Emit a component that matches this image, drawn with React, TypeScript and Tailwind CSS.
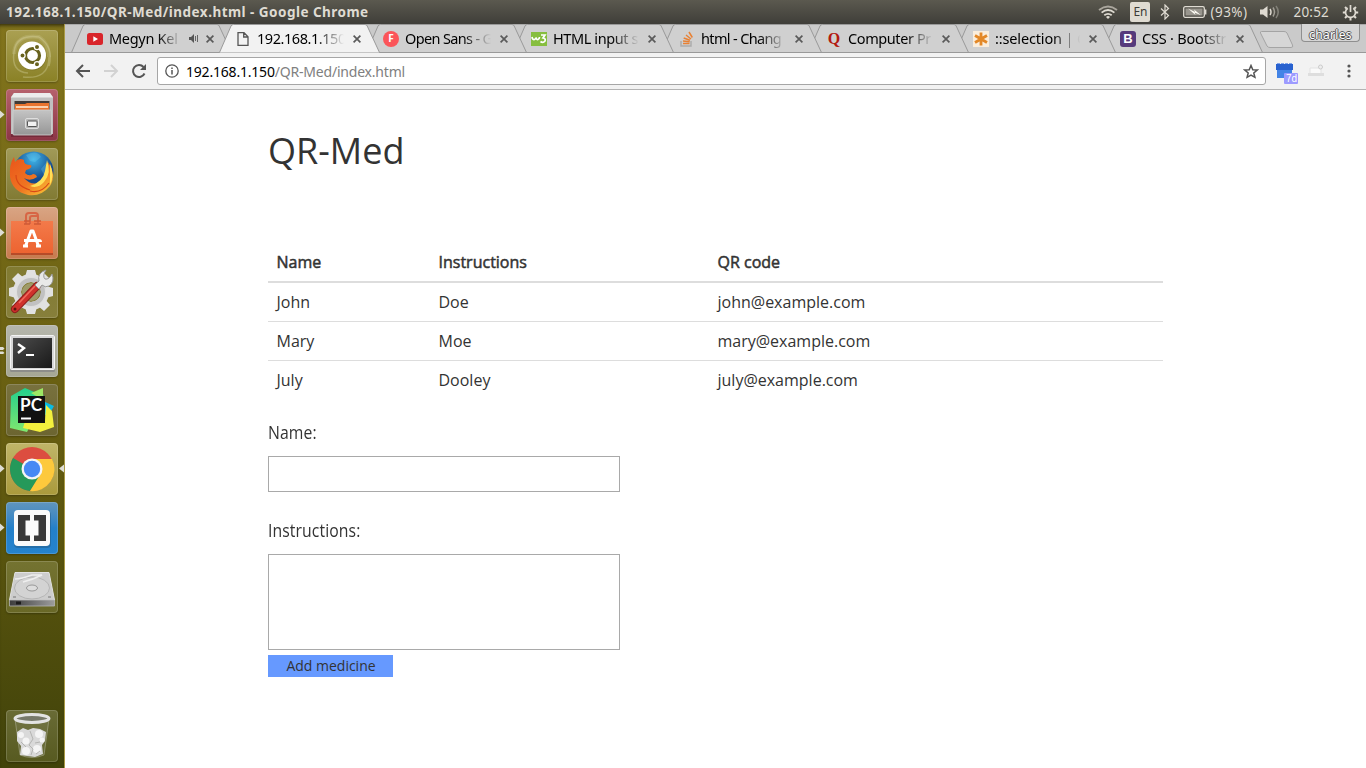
import React from "react";

type Kids = { children: React.ReactNode };

function TopBar() {
  return (
    <header className="flex h-6 shrink-0 items-center justify-between bg-linear-to-b from-[#5b594f] to-[#3f3e39] pl-[6px] pr-[7px] text-[#dfdbd2]">
      <span className="whitespace-nowrap font-[Noto_Sans,sans-serif] text-[13.5px] font-bold leading-6 tracking-[0.47px]">
        192.168.1.150/QR-Med/index.html - Google Chrome
      </span>
      <div className="flex items-center text-[13.5px]">
        <svg width="20" height="16" viewBox="0 0 20 16" fill="none" strokeWidth="1.8" className="mr-[12px]">
          <path d="M1 6Q10-1 19 6" stroke="#aaa69d" />
          <path d="M3.6 8.6Q10 3.5 16.4 8.6" stroke="#dfdbd2" />
          <path d="M6.3 11.2Q10 8.4 13.7 11.2" stroke="#dfdbd2" />
          <path d="M8 13Q10 11.2 12 13L10 15Z" fill="#dfdbd2" stroke="none" />
        </svg>
        <span className="mr-[10px] flex h-5 w-5 items-center justify-center rounded-xs bg-[#dfdbd2] text-[12px] text-[#3c3b37]">En</span>
        <svg width="10" height="16" viewBox="0 0 10 16" fill="none" stroke="#dfdbd2" strokeWidth="1.2" className="mr-[13px]">
          <path d="M1 4.5L8.5 11.5L5 15V1L8.5 4.500L1 11.5" />
        </svg>
        <svg width="24" height="14" viewBox="0 0 24 14" className="mr-[3px]">
          <rect x=".7" y="1.700" width="20.6" height="10.6" rx="1.500" fill="none" stroke="#dfdbd2" strokeWidth="1.300" />
          <rect x="2.500" y="3.500" width="17" height="7" fill="#99968e" />
          <path d="M5 3.600L12 7L11 4.600L18 10.200L11.500 7.600L12.500 10Z" fill="#fffdf5" />
          <path d="M22.600 4.500V9.500" stroke="#dfdbd2" strokeWidth="1.600" />
        </svg>
        <span className="mr-[12px] w-[38px] whitespace-nowrap font-[Noto_Sans,sans-serif] text-[13.5px] tracking-[0.45px]">(93%)</span>
        <svg width="20" height="16" viewBox="0 0 20 16" fill="none" className="mr-[13px]">
          <path d="M0 5.500H3L7.500 2V14L3 10.500H0Z" fill="#dfdbd2" />
          <path d="M10 5Q12 8 10 11" stroke="#dfdbd2" strokeWidth="1.500" />
          <path d="M13 3.500Q16 8 13 12.500" stroke="#a19e95" strokeWidth="1.500" />
          <path d="M16 2Q20.500 8 16 14" stroke="#828078" strokeWidth="1.500" />
        </svg>
        <span className="mr-[13px] font-[Noto_Sans,sans-serif] text-[13.500px] tracking-[0.2px]">20:52</span>
        <svg width="17" height="17" viewBox="0 0 17 17" fill="none" stroke="#dfdbd2">
          <path d="M5.800 4.200A5 5 0 1 0 11.200 4.200M8.500 1V8" strokeWidth="1.700" />
          <path d="M3 3L4.800 4.800M14 3L12.200 4.800M.8 8.500H3.500M13.500 8.500H16.200M3 14L4.800 12.200M14 14L12.200 12.200M8.500 13.500V16.400" strokeWidth="2" />
        </svg>
      </div>
    </header>
  );
}

function Tile({ children, bg, left, right }: { children: React.ReactNode; bg: string; left?: number; right?: boolean }) {
  return (
    <div className="relative h-[52px] w-[65px] shrink-0 pl-[6px]">
      <div className={`h-[52px] w-[52px] overflow-hidden rounded-[4px] shadow-[inset_0_0_0_1px_rgba(255,255,255,.16),0_1px_2px_rgba(0,0,0,.25)] ${bg}`}>
        <svg width="52" height="52" viewBox="0 0 52 52">
          {children}
        </svg>
      </div>
      {left === 1 && (
        <svg className="absolute left-0 top-[21px]" width="5" height="9" viewBox="0 0 5 9"><path d="M0 .5L4.500 4.500L0 8.500Z" fill="#deddd5" /></svg>
      )}
      {left === 2 && (
        <svg className="absolute left-0 top-[21px]" width="5" height="9" viewBox="0 0 5 9"><path d="M0 1H3L4.500 2.500L3 4H0ZM0 5.500H3L4.500 7L3 8H0Z" fill="#deddd5" /></svg>
      )}
      {right && (
        <svg className="absolute right-[1px] top-[21px]" width="6" height="9" viewBox="0 0 6 9"><path d="M6 .5L1 4.500L6 8.500Z" fill="#deddd5" /></svg>
      )}
    </div>
  );
}

function Launcher() {
  return (
    <aside className="flex w-[65px] shrink-0 flex-col gap-[7px] border-r border-[#a99a45] bg-linear-to-b from-[#82741c] via-[#665d10] via-55% to-[#41430a] pt-[6px] shadow-[inset_0_4px_4px_-3px_#221f08]">
      <svg width="0" height="0" className="absolute">
        <defs>
          <linearGradient id="orange" x2="0" y2="1"><stop stopColor="#f37a4a" /><stop offset="1" stopColor="#ed6330" /></linearGradient>
          <linearGradient id="fox" x2="1" y2="1"><stop stopColor="#e9541b" /><stop offset=".55" stopColor="#ef7421" /><stop offset="1" stopColor="#fbd43b" /></linearGradient>
          <radialGradient id="globe" cx=".5" cy=".2"><stop stopColor="#3fb4e8" /><stop offset="1" stopColor="#164a8d" /></radialGradient>
          <linearGradient id="screen" x2="1" y2="1"><stop stopColor="#4c4c4c" /><stop offset="1" stopColor="#191919" /></linearGradient>
          <linearGradient id="pcgreen" x2="0" y2="1"><stop stopColor="#23cf8e" /><stop offset="1" stopColor="#7fe86f" /></linearGradient>
          <linearGradient id="front" x2="0" y2="1"><stop stopColor="#c4c4c4" /><stop offset="1" stopColor="#969696" /></linearGradient>
          <linearGradient id="disk" x2="1" y2="0"><stop stopColor="#3c3c3c" /><stop offset="1" stopColor="#9c9c9c" /></linearGradient>
        </defs>
      </svg>

      <Tile bg="bg-linear-to-b from-[#aaa052] to-[#8a8125]">
        <g fill="none" stroke="#dcd9a8" strokeOpacity=".35" strokeWidth="1.500">
          <path d="M8 24Q9 4 33 7Q43 13 43 27" strokeWidth="4" strokeOpacity=".2" />
          <path d="M8 22Q10 4 33 7M33 7Q48 17 43 36M43 27Q43 50 17 47M22 43Q5 42 8 22" />
        </g>
        <circle cx="26.500" cy="26.500" r="14" fill="#5f5a10" opacity=".3" />
        <circle cx="26" cy="25.500" r="14" fill="#fff" />
        <circle cx="26.500" cy="25.500" r="7" fill="none" stroke="#68621d" strokeWidth="3.200" />
        <g stroke="#fff" strokeWidth="1.200" fill="#68621d">
          <circle cx="16.500" cy="25.500" r="2.600" /><circle cx="31" cy="17" r="2.600" /><circle cx="31" cy="34.200" r="2.600" />
        </g>
      </Tile>

      <Tile bg="bg-linear-to-b from-[#b6616c] to-[#8b3445]" left={1}>
        <path d="M5 45H47V48H5Z" fill="#632230" opacity=".6" />
        <path d="M8 4H44L47 8V45H5V8Z" fill="#c0c0c0" />
        <path d="M8 4H44L47 8.500H5Z" fill="#ececec" />
        <rect x="8.500" y="12" width="35" height="10" fill="#403a37" />
        <path d="M9 15H19L21 14H43V21H9Z" fill="#e9742f" />
        <path d="M10 18H42" stroke="#fff1dc" strokeWidth="1.600" />
        <rect x="7" y="21" width="38.500" height="25" rx="1" fill="url(#front)" stroke="#d0d0d0" strokeWidth=".8" />
        <rect x="19.500" y="29.500" width="13" height="10" rx="1.500" fill="#b5b5b5" stroke="#dedede" strokeWidth="1" />
        <rect x="21.500" y="32" width="9.500" height="5.500" rx=".7" fill="#f2f2f2" stroke="#555" />
      </Tile>

      <Tile bg="bg-linear-to-b from-[#a19a58] to-[#817a33]">
        <circle cx="27.500" cy="23.500" r="20" fill="url(#globe)" />
        <path d="M20 7Q31 1 35 9L29 14L24 13ZM40 15L44 22L39 29L35 21Z" fill="#72cff1" opacity=".3" />
        <path d="M8 9L9 14Q13 9 18 12Q17 17 25 17Q27 20 20 22L19 25Q23 29 27 26Q30 26 31 29Q24 34 18 30Q27 40 37 32Q44 25 42 14Q51 27 44 38Q35 49 22 47Q6 43 4 29Q3 16 8 9Z" fill="url(#fox)" />
        <path d="M41 12Q46 25 38 34Q32 41 24 38Q37 34 39 23ZM44 16Q49 27 44 37" fill="#ffe057" />
        <path d="M10 27Q10 38 24 42M24 43Q35 46 43 35" fill="none" stroke="#d94817" strokeWidth="1.200" />
      </Tile>

      <Tile bg="bg-linear-to-b from-[#d9a584] to-[#c77a4d]" left={1}>
        <path d="M5 14H47V47H5Z" fill="url(#orange)" />
        <path d="M5 46H47V48H5Z" fill="#b74b28" />
        <path d="M20 17V9Q20 6 23 6H29Q32 6 32 9V17M24 17V11Q24 9 26 9H32" fill="none" stroke="#d76545" strokeWidth="2" />
        <path d="M18 14H24M28 14H35M18 17H24M28 17H35" stroke="#cf5a35" strokeWidth="1.500" />
        <path d="M19.500 39L25 24H27L32.500 39M17 39H22M30 39H35M18 33.500H33Q34.500 33.500 34.500 35" fill="none" stroke="#fff" strokeWidth="3" strokeLinejoin="round" />
      </Tile>

      <Tile bg="bg-linear-to-b from-[#817a31] to-[#877f3b]">
        <g transform="translate(25 26)">
          <circle r="14" fill="none" stroke="#dedede" strokeWidth="8" />
          <path d="M-4-22H4L6-15H-6ZM-4 22H4L6 15H-6ZM-22-4V4L-15 6V-6ZM22-4V4L15 6V-6ZM-19-13L-13-19L-7-14L-14-7ZM19-13L13-19L7-14L14-7ZM-19 13L-13 19L-7 14L-14 7ZM19 13L13 19L7 14L14 7Z" fill="#e1e1e1" />
          <circle r="12" fill="none" stroke="#c1c1c1" strokeWidth="4" />
          <circle r="9" fill="#9f9b69" />
        </g>
        <path d="M9 43L31 20" stroke="#8d201c" strokeWidth="8" strokeLinecap="round" />
        <path d="M9 43L31 20" stroke="#cf312c" strokeWidth="6" strokeLinecap="round" />
        <path d="M13 37L29 20" stroke="#f06a5c" strokeWidth="1.600" />
        <path d="M29 19L33 15Q31 7 40 4Q36 10 39 13Q43 14 46 8Q49 16 43 20Q39 22 36 19L33 23Z" fill="#e9e9e9" stroke="#989898" />
        <circle cx="9" cy="43" r="1.500" fill="#5d160f" />
      </Tile>

      <Tile bg="bg-linear-to-b from-[#b5b6ac] to-[#a6a794]" left={2}>
        <rect x="4" y="10" width="45" height="37" rx="1.500" fill="#8d8d89" />
        <rect x="4.500" y="10.500" width="44" height="34" rx="1" fill="#d8d8d8" stroke="#f4f4f4" />
        <rect x="7" y="13" width="39" height="30" fill="url(#screen)" />
        <path d="M12 19L18 23L12 28" fill="none" stroke="#fff" strokeWidth="2.400" />
        <path d="M20 30H28" stroke="#fff" strokeWidth="2" />
      </Tile>

      <Tile bg="bg-linear-to-b from-[#78713e] to-[#6c6530]">
        <path d="M5 12L19 4L33 10L36 5L38 14L21 48L4 44Z" fill="url(#pcgreen)" />
        <path d="M37 17L48 22L43 31H35Z" fill="#0bbbe2" />
        <path d="M40 21L46 27L48 43L34 48L17 44L19 37H39Z" fill="#f3f03d" />
        <path d="M25 9L37 4V16Z" fill="#9de764" />
        <rect x="12" y="12" width="27" height="27" fill="#111" />
        <text x="14" y="27" fill="#fff" fontFamily="Lato, sans-serif" fontWeight="700" fontSize="16.500" textLength="22" lengthAdjust="spacingAndGlyphs">PC</text>
        <path d="M15 34.500H25" stroke="#fff" strokeWidth="2" />
      </Tile>

      <Tile bg="bg-linear-to-b from-[#c0b568] to-[#aa9a3b]" left={1} right>
        <circle cx="26" cy="26" r="22" fill="#dc4d40" />
        <path d="M26 26L7 15A22 22 0 0 0 24 48L35.500 31Z" fill="#25995a" />
        <path d="M26 16H46A22 22 0 0 1 24 48L35 30Z" fill="#fdc93c" />
        <circle cx="26" cy="26" r="10.500" fill="#f5f5f5" />
        <circle cx="26" cy="26" r="8.200" fill="#4789f4" />
      </Tile>

      <Tile bg="bg-linear-to-b from-[#6095bc] via-[#2380c9] to-[#2583ce]" left={1}>
        <rect x="8" y="9" width="37" height="37" rx="4" fill="#24577f" opacity=".45" />
        <rect x="8" y="8" width="36" height="36" rx="4" fill="#fafafa" />
        <path d="M12 13H24V18.500H19.500V33.500H24V39H12ZM28 13H40V39H28V33.500H32.500V18.500H28Z" fill="#393939" />
      </Tile>

      <Tile bg="bg-linear-to-b from-[#747331] to-[#696827]">
        <path d="M9 11.500H43L48.500 39H3.500Z" fill="#cdcdcd" stroke="#e2e2e2" />
        <path d="M3.500 39H48.500V45H3.500Z" fill="url(#disk)" stroke="#b4b4b4" strokeWidth=".8" />
        <path d="M10 40.500H15V43.500H10Z" fill="#1c1c1c" />
        <ellipse cx="26" cy="27" rx="17.500" ry="11" fill="#d3d3d3" stroke="#adadad" strokeWidth=".8" />
        <ellipse cx="26" cy="27" rx="5.500" ry="3" fill="#ddd" stroke="#999" />
        <path d="M9 18Q15 18 26 14H36Q28 18 17 21" fill="none" stroke="#eee" strokeWidth="1.500" />
        <path d="M7 36H10M42 36H45" stroke="#777" />
      </Tile>

      <div className="mb-[6px] mt-auto">
        <Tile bg="bg-linear-to-b from-[#696b35] to-[#575a20]">
          <path d="M9 9H43L38 45Q26 50 14 45Z" fill="#8d916a" fillOpacity=".25" stroke="#cfd0c4" strokeOpacity=".4" />
          <path d="M11 22L17 18L22 20L27 18L34 19L40 22L39 31L36 35L37 44L29 47L21 46L14 45L15 36L11 31Z" fill="#d9d9d9" />
          <g fill="#f4f4f4"><circle cx="15" cy="25" r="3" /><circle cx="20" cy="31" r="3.500" /><circle cx="33" cy="24" r="4" /><circle cx="36" cy="30" r="2.500" /><circle cx="20" cy="41" r="4" /><circle cx="31" cy="39" r="4" /></g>
          <path d="M24 21L27 29L23 35L27 39L25 45M34 32L29 33M15 32L20 37M34 41L30 44" fill="none" stroke="#b4b4b2" strokeWidth="1" />
          <ellipse cx="26" cy="8.500" rx="17" ry="4" fill="#77796a" stroke="#e3e3e3" strokeWidth="3" />
        </Tile>
      </div>
    </aside>
  );
}

function TabItem({ title, icon, active, sound, width, z, spacing, pad }: { title: string; icon: React.ReactNode; active?: boolean; sound?: boolean; width: string; z: string; spacing: string; pad: string }) {
  return (
    <div className={`relative h-[29px] shrink-0 ${width} ${z}`}>
      <svg className="absolute left-0 top-0" width="162" height="29" viewBox="0 0 162 29">
        <path d="M.5 28.500L12 2Q12.800.5 14.500.5H146Q147.500.5 148.200 2L160.500 28.500" fill={active ? "#f2f2f2" : "#d0d0d0"} stroke="#999" />
        {!active && <path d="M0 28.500H162" stroke="#999" />}
      </svg>
      <div className={`relative flex h-[29px] items-center pr-[5px] ${pad}`}>
        <span className="flex h-4 w-4 shrink-0 items-center justify-center">{icon}</span>
        <span className={`ml-[6px] min-w-0 flex-1 whitespace-nowrap bg-linear-to-r from-black from-68% to-transparent bg-clip-text text-[14.500px] text-transparent ${spacing}`}>{title}</span>
        {sound && (
          <svg width="10" height="9" viewBox="0 0 10 9" className="ml-[8px] shrink-0"><path d="M0 3H2L5 0V9L2 6H0Z" fill="#555" /><path d="M6.500 2V7M8.500 1V8" stroke="#666" /></svg>
        )}
        <svg width="8" height="8" viewBox="0 0 8 8" className={sound ? "ml-[7px] shrink-0" : "ml-[9px] shrink-0"}><path d="M.6.6L7.400 7.400M7.400.6L.6 7.400" stroke="#5a5a5a" strokeWidth="1.700" /></svg>
      </div>
    </div>
  );
}

function Tabs() {
  return (
    <div className="flex h-[29px] shrink-0 border-b border-[#999] bg-[#cacaca] pl-[6px] shadow-[inset_0_1px_0_#aaa] font-[Noto_Sans,sans-serif]">
      <TabItem title="Megyn Kel" sound width="w-[148px]" z="z-[8]" spacing="tracking-[-0.3px]" pad="pl-4"
        icon={<svg width="16" height="12" viewBox="0 0 16 12"><rect width="16" height="12" rx="2.500" fill="#d9252a" /><path d="M6.300 3.200L11 6L6.300 8.800Z" fill="#fff" /></svg>} />
      <TabItem title="192.168.1.150" active width="w-[147px]" z="z-[9]" spacing="tracking-[-0.45px]" pad="pl-4"
        icon={<svg width="12" height="14" viewBox="0 0 12 14" fill="none" stroke="#555" strokeWidth="1.300"><path d="M1 .7H7L11 4.700V13.300H1ZM6.700.7V5H11" /></svg>} />
      <TabItem title="Open Sans - G" width="w-[147px]" z="z-[7]" spacing="tracking-[-0.65px]" pad="pl-[17px]"
        icon={<span className="flex h-4 w-4 items-center justify-center rounded-full bg-[#fb5559] text-[10px] font-bold text-white">F</span>} />
      <TabItem title="HTML input s" width="w-[148px]" z="z-[6]" spacing="tracking-[-0.4px]" pad="pl-[18px]"
        icon={<svg width="16" height="14" viewBox="0 0 16 14"><rect width="16" height="14" fill="#86be3e" /><path d="M1 5Q1.500 8 3.500 7.500Q5 7 5 5.500Q5.500 8 7 7.500Q8.500 7 8.500 5M10 3H14L12 6Q15 6.500 14 9Q12 11.500 9.500 9.500" fill="none" stroke="#fff" strokeWidth="1.700" /></svg>} />
      <TabItem title="html - Chang" width="w-[147px]" z="z-[5]" spacing="tracking-[-0.65px]" pad="pl-[18px]"
        icon={<svg width="14" height="16" viewBox="0 0 14 16" fill="none"><path d="M1 10V15H11V10" stroke="#aaa" strokeWidth="1.400" /><path d="M3 12.500H9.500M3 10L9.700 10.800M3.700 7L10 9.300M6 4L11 8M9 1L12.300 6.500" stroke="#e88134" strokeWidth="1.500" /></svg>} />
      <TabItem title="Computer Pr" width="w-[147px]" z="z-[4]" spacing="tracking-[-0.4px]" pad="pl-[18px]"
        icon={<span className="font-[Liberation_Serif,serif] text-[16px] font-bold leading-4 text-[#b31b10]">Q</span>} />
      <TabItem title="::selection | C" width="w-[147px]" z="z-[3]" spacing="tracking-[-0.15px]" pad="pl-[18px]"
        icon={<svg width="16" height="16" viewBox="0 0 16 16"><path d="M0 0H16V16H0Z" fill="#faeddc" /><path d="M8 1.500V14.500M2 4.500L14 11.500M14 4.500L2 11.500" stroke="#e38827" strokeWidth="2.800" /></svg>} />
      <TabItem title="CSS · Bootstr" width="w-[147px]" z="z-[2]" spacing="tracking-[-0.2px]" pad="pl-[18px]"
        icon={<span className="flex h-4 w-4 items-center justify-center rounded-[3px] bg-[#563a7c] font-[Liberation_Sans,sans-serif] text-[13px] font-bold text-white">B</span>} />
      <svg width="38" height="29" viewBox="0 0 38 29" className="relative z-[3] ml-[9px] shrink-0"><path d="M3.500 7.500H26Q28 7.500 29 9L34.500 21Q35.500 23.500 33 23.500H12Q10 23.500 9 22L2.500 9Q2 7.500 3.500 7.500Z" fill="#d6d6d6" stroke="#a4a4a4" /></svg>
      <span className="ml-[5px] flex h-[18px] w-[59px] shrink-0 items-center justify-center rounded-b-[4px] border border-t-0 border-[#8f8f8f] bg-[#d5d5d5] pt-1 text-[12px] tracking-[0.35px] text-white [text-shadow:1px_0_0_#555,-1px_0_0_#555,0_1px_0_#555,0_-1px_0_#555]">charles</span>
    </div>
  );
}

function Toolbar() {
  return (
    <div className="flex h-[37px] shrink-0 items-center border-b border-[#b3b3b3] bg-[#f2f2f2] pl-[10px]">
      <svg width="16" height="14" viewBox="0 0 16 14" fill="none" stroke="#555" strokeWidth="2" className="mr-3"><path d="M15 7H2M8 1L2 7L8 13" /></svg>
      <svg width="16" height="14" viewBox="0 0 16 14" fill="none" stroke="#d2d2d2" strokeWidth="2" className="mr-3"><path d="M1 7H13M8 1L14 7L8 13" /></svg>
      <svg width="16" height="16" viewBox="0 0 16 16" fill="none" className="mr-[10px]"><path d="M13.500 10.500A6 6 0 1 1 12.500 4" stroke="#555" strokeWidth="2" /><path d="M15 1V7H9Z" fill="#555" /></svg>
      <div className="flex h-[28px] w-[1109px] items-center rounded-[3px] border border-[#a6a6a6] bg-white pl-[7px] pr-[6px]">
        <svg width="14" height="14" viewBox="0 0 14 14" fill="none" className="mr-[7px]"><circle cx="7" cy="7" r="6.200" stroke="#555" strokeWidth="1.300" /><path d="M7 6V10.500M7 3.500V5" stroke="#555" strokeWidth="1.500" /></svg>
        <span className="whitespace-nowrap font-[Noto_Sans,sans-serif] text-[14px] tracking-[-0.2px] text-[#808080]"><span className="text-black">192.168.1.150</span>/QR-Med/index.html</span>
        <svg width="16" height="15" viewBox="0 0 16 15" fill="none" className="ml-auto"><path d="M8 1.500L9.800 5.700L14.200 6L10.800 9L11.900 13.300L8 11L4.100 13.300L5.200 9L1.800 6L6.200 5.700Z" stroke="#555" strokeWidth="1.500" /></svg>
      </div>
      <svg width="24" height="26" viewBox="0 0 24 26" className="ml-[10px] shrink-0">
        <path d="M1 6H16V20H1Z" fill="#4384e6" /><path d="M0 6H17V12H0Z" fill="#2861cf" /><path d="M1 5H4V6H1ZM5 5H8V6H5ZM9 5H12V6H9ZM13 5H16V6H13Z" fill="#7fa3ea" />
        <rect x="8" y="15" width="14" height="11" rx="1" fill="#9d9bff" />
        <text x="10" y="24" fontSize="10" fontFamily="Liberation Sans, sans-serif" fill="#fff">7d</text>
      </svg>
      <svg width="18" height="16" viewBox="0 0 18 16" className="ml-[7px] mr-[22px] shrink-0"><path d="M3 5H14V12H3Z" fill="#fafafa" stroke="#e2e2e2" /><path d="M1 10H17V13H1Z" fill="#dedede" /><circle cx="13.500" cy="4" r="2" fill="#eee" stroke="#ccc" /></svg>
      <svg width="4" height="14" viewBox="0 0 4 14" fill="#555"><circle cx="2" cy="2" r="1.600" /><circle cx="2" cy="7" r="1.600" /><circle cx="2" cy="12" r="1.600" /></svg>
    </div>
  );
}

const Row = ({ children, line }: Kids & { line: string }) => (
  <div className={`grid grid-cols-[162px_279px_1fr] px-[8.5px] pt-2 leading-[22px] ${line}`}>{children}</div>
);

function Label({ children }: Kids) {
  return <div className="origin-left scale-x-[.83] whitespace-nowrap font-[Open_Sans,sans-serif] text-[19px] leading-[25px] tracking-[0.1px]">{children}</div>;
}

function Page() {
  return (
    <main className="flex-1 bg-white pl-[203px] pt-[36px] font-[Open_Sans,sans-serif] text-[16px] text-[#333]">
      <h1 className="h-[117px] text-[36px] leading-[50px]">QR-Med</h1>
      <section className="w-[895px]">
        <Row line="h-[40px] border-b-2 border-[#ddd] [-webkit-text-stroke:0.5px_#333]"><span>Name</span><span>Instructions</span><span>QR code</span></Row>
        <Row line="h-[39px] border-b border-[#ddd]"><span>John</span><span>Doe</span><span>john@example.com</span></Row>
        <Row line="h-[39px] border-b border-[#ddd]"><span>Mary</span><span>Moe</span><span>mary@example.com</span></Row>
        <Row line="h-[39px]"><span>July</span><span>Dooley</span><span>july@example.com</span></Row>
      </section>
      <form className="mt-5">
        <Label>Name:</Label>
        <input className="mt-[11px] block h-[36px] w-[352px] border border-[#a9a9a9] bg-white" />
        <div className="mt-[26px]"><Label>Instructions:</Label></div>
        <textarea className="mt-[11px] block h-[96px] w-[352px] resize-none border border-[#a9a9a9] bg-white" />
        <button type="button" className="mt-[5px] block h-[22px] w-[125px] bg-[#6699ff] pl-px text-[14px] leading-[22px]">Add medicine</button>
      </form>
    </main>
  );
}

export default function App() {
  return (
    <div className="flex h-[768px] w-[1366px] flex-col overflow-hidden bg-white font-[Noto_Sans,sans-serif]">
      <TopBar />
      <div className="flex min-h-0 flex-1">
        <Launcher />
        <div className="flex min-w-0 flex-1 flex-col">
          <Tabs />
          <Toolbar />
          <Page />
        </div>
      </div>
    </div>
  );
}
